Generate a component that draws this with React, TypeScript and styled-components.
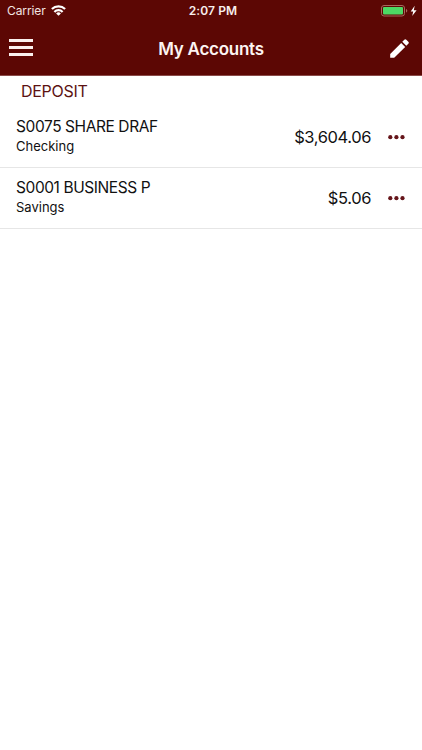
import React from 'react';
import styled, { createGlobalStyle } from 'styled-components';

interface Account {
    name: string;
    type: string;
    balance: string;
}

const accounts: Account[] = [
    { name: 'S0075 SHARE DRAF', type: 'Checking', balance: '$3,604.06' },
    { name: 'S0001 BUSINESS P', type: 'Savings', balance: '$5.06' },
];

const WifiIcon = () => (
    <svg width="15" height="11" viewBox="0 0 15 11" fill="none" stroke="#fff" strokeWidth="2.2">
        <path d="M.9 4.1a9.3 9.3 0 0 1 13.2 0" />
        <path d="M3.4 6.9a5.7 5.7 0 0 1 8.2 0" />
        <path d="M7.5 10.8 5.1 8.5a3.3 3.3 0 0 1 4.8 0z" fill="#fff" stroke="none" />
    </svg>
);

const BatteryIcon = () => (
    <svg width="36" height="12" viewBox="0 0 36 12">
        <rect x="0.5" y="0.5" width="23" height="10.5" rx="2.5" fill="none" stroke="#a6685c" />
        <rect x="2" y="2" width="20" height="7.5" rx="1" fill="#4cd964" />
        <path d="M25 4v3.6c.8-.3 1.3-1 1.3-1.8S25.8 4.3 25 4z" fill="#a6685c" />
        <path d="M33.7.8 29.7 6.4h2.5L31.2 11l4.4-5.8h-2.8z" fill="#fff" />
    </svg>
);

const PencilIcon = () => (
    <svg width="20" height="20" viewBox="0 0 20 20" fill="#fff">
        <path d="M.2 18.8V14.9L11.2 3.9l4 4L4.2 18.8z" />
        <path d="M12.3 2.8 14.3.8q1-1 2 0l2 2q1 1 0 2l-2 2z" />
    </svg>
);

const DotsIcon = () => (
    <svg width="17" height="5" viewBox="0 0 17 5" fill="#65151a">
        <circle cx="2.3" cy="2.2" r="2.1" />
        <circle cx="8.4" cy="2.2" r="2.1" />
        <circle cx="14.5" cy="2.2" r="2.1" />
    </svg>
);

const App: React.FC = () => (
    <Screen>
        <GlobalStyle />
        <Header>
            <StatusBar>
                <Carrier>
                    Carrier
                    <WifiIcon />
                </Carrier>
                <Time>2:07 PM</Time>
                <BatteryStatus>
                    <BatteryIcon />
                </BatteryStatus>
            </StatusBar>
            <NavBar>
                <MenuButton aria-label="Menu">
                    <MenuBar />
                    <MenuBar />
                    <MenuBar />
                </MenuButton>
                <Title>My Accounts</Title>
                <EditButton aria-label="Edit">
                    <PencilIcon />
                </EditButton>
            </NavBar>
        </Header>
        <SectionTitle>DEPOSIT</SectionTitle>
        <AccountList>
            {accounts.map((account) => (
                <AccountRow key={account.name}>
                    <AccountInfo>
                        <AccountName>{account.name}</AccountName>
                        <AccountType>{account.type}</AccountType>
                    </AccountInfo>
                    <Balance>{account.balance}</Balance>
                    <MoreButton aria-label="More">
                        <DotsIcon />
                    </MoreButton>
                </AccountRow>
            ))}
        </AccountList>
    </Screen>
);

const GlobalStyle = createGlobalStyle`
    * {
        box-sizing: border-box;
    }
    body {
        margin: 0;
        background-color: #fff;
    }
`;

const Screen = styled.main`
    min-height: 100vh;
    background-color: #fff;
    font-family: Inter, 'Liberation Sans', sans-serif;
    color: #111;
`;

const Header = styled.header`
    height: 76px;
    background-color: #5c0704;
    border-bottom: 1px solid #8a4a48;
    color: #fff;
`;

const StatusBar = styled.div`
    display: grid;
    grid-template-columns: 1fr auto 1fr;
    align-items: center;
    height: 22px;
    padding: 0 5px 0 7px;
    font-size: 12px;
    line-height: 22px;
`;

const Carrier = styled.div`
    display: flex;
    align-items: center;
    gap: 5px;
    color: #f3e4e2;
    letter-spacing: -0.1px;

    svg {
        margin-bottom: 2px;
    }
`;

const Time = styled.div`
    padding-left: 2px;
    font-weight: 600;
    letter-spacing: 0.1px;
    color: #f8eeec;
`;

const BatteryStatus = styled.div`
    display: flex;
    justify-content: flex-end;
`;

const NavBar = styled.nav`
    display: grid;
    grid-template-columns: 1fr auto 1fr;
    align-items: center;
    height: 53px;
    padding: 0 12px 0 9px;
`;

const IconButton = styled.button`
    display: flex;
    padding: 0;
    border: none;
    background: none;
    color: #fff;
    cursor: pointer;
`;

const MenuButton = styled(IconButton)`
    flex-direction: column;
    gap: 4px;
    width: 24px;
    padding-bottom: 2px;
`;

const MenuBar = styled.span`
    width: 24px;
    height: 3px;
    background-color: #fbf0ee;
`;

const Title = styled.h1`
    margin: 0;
    padding-left: 3px;
    font-size: 17px;
    font-weight: 600;
    letter-spacing: -0.25px;
    color: #fdf4f2;
`;

const EditButton = styled(IconButton)`
    justify-self: end;
`;

const SectionTitle = styled.h2`
    height: 31px;
    margin: 0;
    padding-left: 21px;
    font-size: 16px;
    font-weight: 400;
    line-height: 31px;
    letter-spacing: -0.3px;
    color: #5c1212;
`;

const AccountList = styled.ul`
    margin: 0;
    padding: 0;
    list-style: none;
`;

const AccountRow = styled.li`
    display: flex;
    align-items: center;
    height: 61px;
    padding: 0 17px 0 16px;
    border-bottom: 1px solid #e6e6e6;
`;

const AccountInfo = styled.div`
    flex: 1;
    padding-bottom: 2px;
`;

const AccountName = styled.div`
    font-size: 15.5px;
    line-height: 20px;
    letter-spacing: -0.42px;
`;

const AccountType = styled.div`
    font-size: 13px;
    line-height: 19px;
`;

const Balance = styled.div`
    font-size: 16.5px;
    line-height: 20px;
    letter-spacing: -0.4px;
`;

const MoreButton = styled(IconButton)`
    margin-left: 17px;
`;

export default App;
